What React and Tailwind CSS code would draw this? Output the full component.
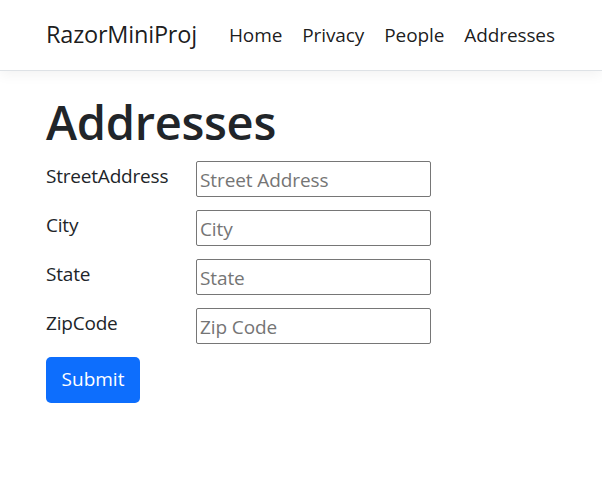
import React from 'react';

const fields = [
  { label: 'StreetAddress', placeholder: 'Street Address' },
  { label: 'City', placeholder: 'City' },
  { label: 'State', placeholder: 'State' },
  { label: 'ZipCode', placeholder: 'Zip Code' },
];

const links = ['Home', 'Privacy', 'People', 'Addresses'];

const App = () => {
  return (
    <div className="min-h-[485px] bg-white text-[#212529] font-['Open_Sans',sans-serif]">
      <nav className="h-[71px] flex items-center px-[46px] border-b border-[#dee2e6] shadow-[0_4px_12px_rgba(0,0,0,0.05)]">
        <a className="text-[23.5px] text-black/90 mr-[22px] tracking-[-0.2px]">RazorMiniProj</a>
        <ul className="flex">
          {links.map((link) => (
            <li key={link} className="px-[10px] text-[19px] text-black/90 tracking-[-0.1px]">
              {link}
            </li>
          ))}
        </ul>
      </nav>

      <main className="px-[46px] pt-[26px]">
        <h1 className="text-[47px] font-semibold leading-[1.1] mb-[12px] tracking-[-0.3px]">Addresses</h1>
        <form className="flex flex-col gap-[13px]">
          {fields.map((f) => (
            <div key={f.label} className="flex items-start">
              <label className="w-[150px] text-[19px] leading-[27px] pt-[2px] tracking-[-0.2px]">{f.label}</label>
              <input
                type="text"
                placeholder={f.placeholder}
                className="w-[235px] h-[36px] border border-[#767676] rounded-[2px] px-[3px] pt-[2px] text-[19px] placeholder:text-[#757575] outline-none tracking-[-0.1px]"
              />
            </div>
          ))}
          <div>
            <button
              type="button"
              className="w-[94px] h-[46px] bg-[#0d6efd] text-white text-[19px] rounded-[5px]"
            >
              Submit
            </button>
          </div>
        </form>
      </main>
    </div>
  );
};

export default App;
